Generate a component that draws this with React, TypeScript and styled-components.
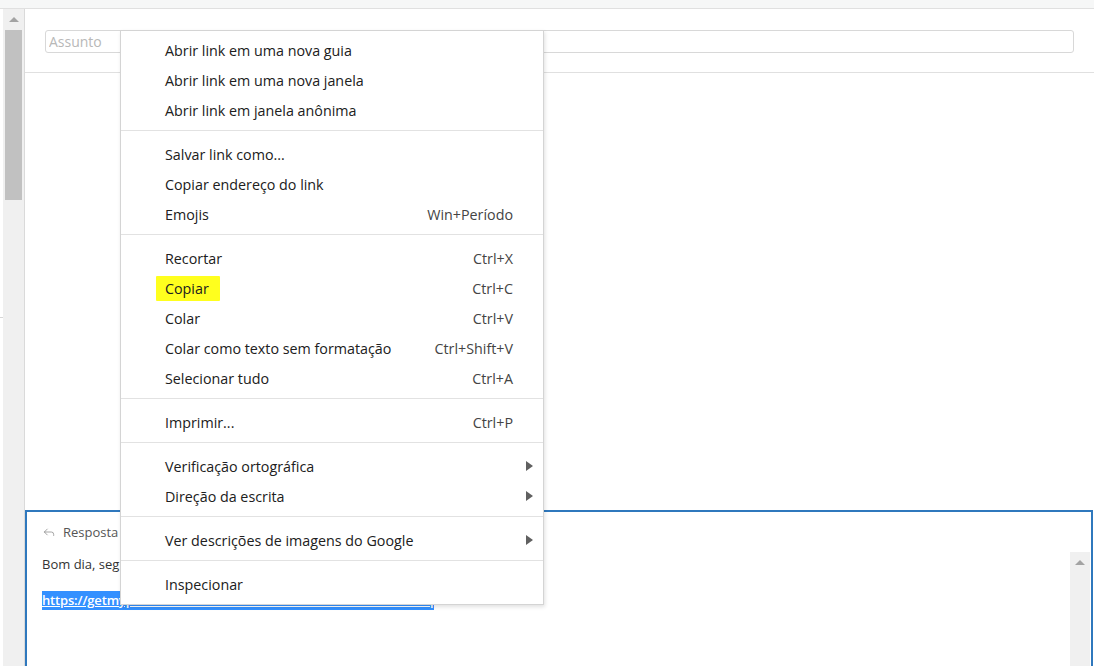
import React from "react";
import styled, { createGlobalStyle } from "styled-components";
import { Reply } from "lucide-react";

const GlobalStyle = createGlobalStyle`
  html, body {
    margin: 0;
    padding: 0;
    background: #ffffff;
  }
  body {
    font-family: "Open Sans", "Noto Sans", "Liberation Sans", sans-serif;
  }
`;

const Page = styled.div`
  position: relative;
  width: 1094px;
  height: 666px;
  overflow: hidden;
  display: flex;
  flex-direction: column;
  background: #ffffff;
`;

const TopStrip = styled.div`
  height: 8px;
  flex-shrink: 0;
  background: #f6f7f7;
  border-bottom: 1px solid #e0e0e0;
`;

const Body = styled.div`
  flex: 1;
  display: flex;
  min-height: 0;
`;

const Gutter = styled.div`
  width: 3px;
  flex-shrink: 0;
  display: flex;
  flex-direction: column;
  padding-top: 308px;
`;

const GutterTick = styled.div`
  height: 1px;
  background: #d6d6d6;
`;

const ScrollTrack = styled.div`
  width: 20px;
  flex-shrink: 0;
  background: #f0f0f0;
  display: flex;
  flex-direction: column;
  align-items: center;
`;

const OuterTrack = styled(ScrollTrack)`
  width: 21px;
  border-right: 1px solid #dadada;
`;

const ArrowUp = styled.div`
  margin-top: 8px;
  width: 0;
  height: 0;
  border-left: 5px solid transparent;
  border-right: 5px solid transparent;
  border-bottom: 5px solid #a3a3a3;
`;

const Thumb = styled.div`
  margin-top: 8px;
  width: 17px;
  height: 170px;
  background: #c1c1c1;
`;

const Main = styled.div`
  flex: 1;
  display: flex;
  flex-direction: column;
  min-width: 0;
`;

const Header = styled.div`
  padding: 21px 20px 19px 20px;
  border-bottom: 1px solid #e0e0e0;
`;

const SubjectInput = styled.input`
  box-sizing: border-box;
  width: 100%;
  height: 23px;
  border: 1px solid #d8d8d8;
  border-radius: 3px;
  padding: 0 3px;
  font-family: "Open Sans", "Noto Sans", sans-serif;
  font-size: 14px;
  outline: none;
  &::placeholder {
    color: #b8b8b8;
  }
`;

const Blank = styled.div`
  flex: 1;
`;

const Compose = styled.div`
  height: 154px;
  margin-right: 1px;
  border: 2px solid #2f78bd;
  border-bottom: none;
  display: flex;
  flex-direction: column;
  font-size: 13px;
`;

const ComposeHead = styled.div`
  height: 40px;
  display: flex;
  align-items: center;
  gap: 7px;
  padding-left: 15px;
  color: #555555;
  svg {
    color: #8a8a8a;
  }
`;

const ComposeBody = styled.div`
  flex: 1;
  display: flex;
  padding-right: 1px;
`;

const ComposeText = styled.div`
  flex: 1;
  padding: 3px 0 0 15px;
  color: #333333;
  line-height: 18px;
  p {
    margin: 0 0 18px 0;
  }
`;

const Selected = styled.a`
  color: #ffffff;
  background: #3390ff;
  text-decoration: underline;
  font-weight: 600;
  font-size: 13px;
  letter-spacing: -0.17px;
  padding: 0 0 1px 0;
`;

const Menu = styled.div`
  position: absolute;
  left: 120px;
  top: 30px;
  width: 422px;
  box-sizing: content-box;
  padding: 4px 0 5px 0;
  background: #ffffff;
  border: 1px solid #d4d4d4;
  box-shadow: 1px 2px 4px rgba(0, 0, 0, 0.12);
  font-size: 14.3px;
  color: #202020;
`;

const Item = styled.div`
  height: 30px;
  display: flex;
  align-items: center;
  padding: 0 30px 0 44px;
`;

const Label = styled.span`
  flex: 1;
`;

const Shortcut = styled.span`
  color: #444444;
`;

const Highlight = styled.span`
  background: #ffff1e;
  margin-left: -9px;
  padding: 3px 11px 3px 9px;
  border-radius: 1px;
`;

const Arrow = styled.span`
  width: 0;
  height: 0;
  margin-right: -20px;
  border-top: 5px solid transparent;
  border-bottom: 5px solid transparent;
  border-left: 7px solid #606060;
`;

const Separator = styled.div`
  height: 1px;
  margin: 5px 0 8px 0;
  background: #e2e2e2;
`;

type Entry =
  | { label: string; shortcut?: string; sub?: boolean; mark?: boolean }
  | "sep";

const entries: Entry[] = [
  { label: "Abrir link em uma nova guia" },
  { label: "Abrir link em uma nova janela" },
  { label: "Abrir link em janela anônima" },
  "sep",
  { label: "Salvar link como..." },
  { label: "Copiar endereço do link" },
  { label: "Emojis", shortcut: "Win+Período" },
  "sep",
  { label: "Recortar", shortcut: "Ctrl+X" },
  { label: "Copiar", shortcut: "Ctrl+C", mark: true },
  { label: "Colar", shortcut: "Ctrl+V" },
  { label: "Colar como texto sem formatação", shortcut: "Ctrl+Shift+V" },
  { label: "Selecionar tudo", shortcut: "Ctrl+A" },
  "sep",
  { label: "Imprimir...", shortcut: "Ctrl+P" },
  "sep",
  { label: "Verificação ortográfica", sub: true },
  { label: "Direção da escrita", sub: true },
  "sep",
  { label: "Ver descrições de imagens do Google", sub: true },
  "sep",
  { label: "Inspecionar" },
];

function ContextMenu() {
  return (
    <Menu>
      {entries.map((e, i) =>
        e === "sep" ? (
          <Separator key={i} />
        ) : (
          <Item key={i}>
            <Label>{e.mark ? <Highlight>{e.label}</Highlight> : e.label}</Label>
            {e.shortcut && <Shortcut>{e.shortcut}</Shortcut>}
            {e.sub && <Arrow />}
          </Item>
        )
      )}
    </Menu>
  );
}

export default function App() {
  return (
    <>
      <GlobalStyle />
      <Page>
        <TopStrip />
        <Body>
          <Gutter>
            <GutterTick />
          </Gutter>
          <OuterTrack>
            <ArrowUp />
            <Thumb />
          </OuterTrack>
          <Main>
            <Header>
              <SubjectInput placeholder="Assunto" />
            </Header>
            <Blank />
            <Compose>
              <ComposeHead>
                <Reply size={14} strokeWidth={1.3} />
                <span>Resposta</span>
              </ComposeHead>
              <ComposeBody>
                <ComposeText>
                  <p>Bom dia, segue o link para redefinição da senha:</p>
                  <Selected href="#">
                    https://getmypassword.cloud.totvs.com.br/restore/PUh6oIzMEq
                  </Selected>
                </ComposeText>
                <ScrollTrack>
                  <ArrowUp />
                </ScrollTrack>
              </ComposeBody>
            </Compose>
          </Main>
        </Body>
        <ContextMenu />
      </Page>
    </>
  );
}
